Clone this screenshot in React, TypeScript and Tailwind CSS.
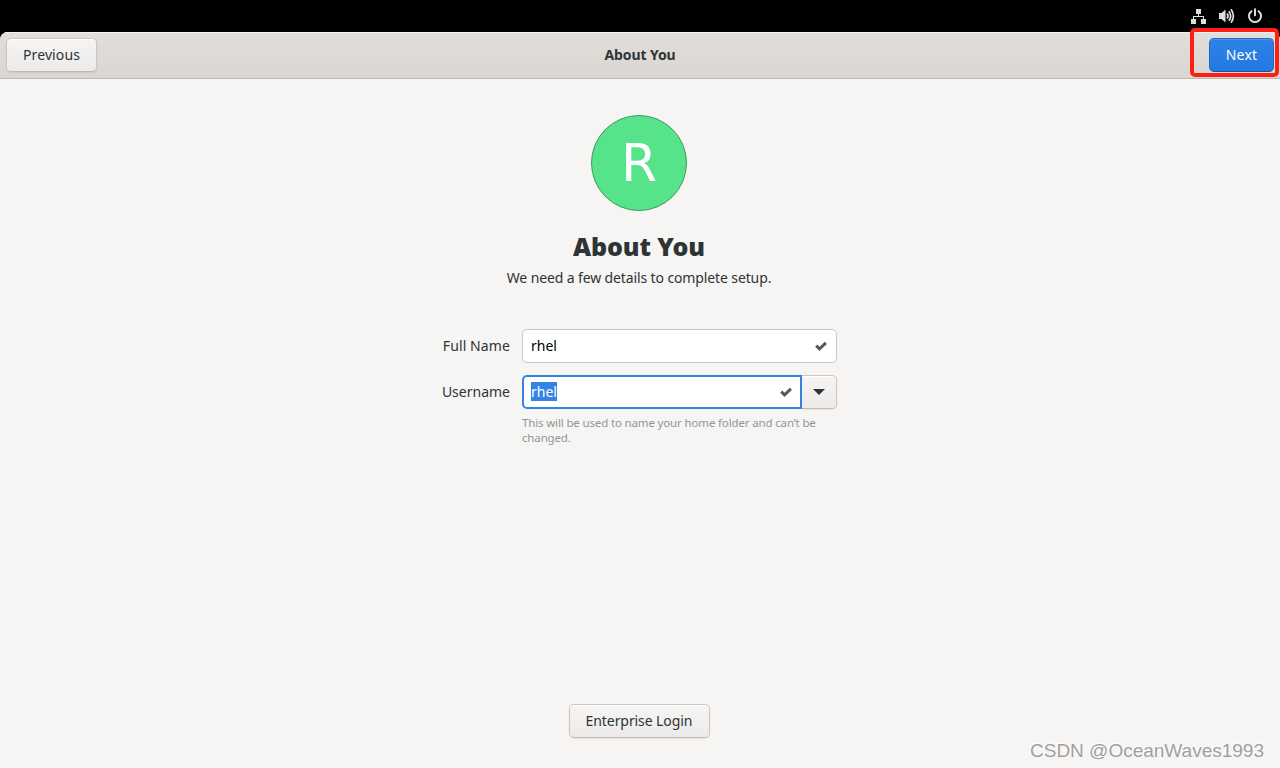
/**
 * Initial setup: "About You" page
 */
import { useState } from 'react'

const button =
  'h-[34px] border border-[#cdc7c2] border-b-[#bfb8b1] rounded-[5px] bg-linear-to-b from-[#f6f5f3] to-[#edebe9] shadow-[inset_0_1px_#fff,0_1px_2px_rgba(0,0,0,0.07)] flex items-center justify-center whitespace-nowrap'

function NetworkIcon() {
  return (
    <svg width="16" height="16" viewBox="0 0 16 16" fill="#dededa">
      <path d="M5 1h5v5H5zM0 11h5v5H0zM10 11h5v5h-5z" />
      <path d="M7 6h1v2h5v3h-1V9H3v2H2V8h5z" />
    </svg>
  )
}

function VolumeIcon() {
  return (
    <svg width="16" height="16" viewBox="0 0 16 16" fill="none" stroke="#dededa">
      <path d="M0 5h2.500L6.500 1.500v13L2.500 11H0z" fill="#dededa" stroke="none" />
      <path d="M8 5.500q2 2.500 0 5" strokeWidth="1.700" />
      <path d="M9.900 3.200q3.600 4.800 0 9.600" strokeWidth="1.800" />
      <path d="M12 1.200q4.800 6.800 0 13.600" strokeWidth="1.700" />
    </svg>
  )
}

function PowerIcon() {
  return (
    <svg width="16" height="16" viewBox="0 0 16 16" fill="none" stroke="#dededa" strokeWidth="2" strokeLinecap="round">
      <path d="M8 1.200v6" />
      <path d="M4.500 3.200a6 6 0 1 0 7 0" />
    </svg>
  )
}

function CheckIcon() {
  return (
    <svg width="12" height="10" viewBox="0 0 12 10" fill="none" stroke="#555b5b" strokeWidth="3">
      <path d="M1.200 4.600 4.500 7.900 10.900 1.800" />
    </svg>
  )
}

export default function App() {
  const [fullName] = useState('rhel')
  const [username] = useState('rhel')

  return (
    <div className="relative w-[1280px] h-[768px] overflow-hidden bg-black font-['Noto_Sans','Noto_Sans_CJK_SC',sans-serif] text-[14px] leading-5 text-[#2e3436] flex flex-col">
      <div className="h-8 shrink-0 flex items-center justify-end gap-3 pr-[17px]">
        <NetworkIcon />
        <VolumeIcon />
        <PowerIcon />
      </div>

      <div className="flex-1 flex flex-col rounded-t-lg overflow-hidden bg-[#f6f5f4]">
        <header className="h-[47px] shrink-0 grid grid-cols-[1fr_auto_1fr] items-center px-[6px] border-b border-[#bfb8b1] bg-linear-to-b from-[#e1dedb] to-[#dad6d2] shadow-[inset_0_1px_#f4f2f1]">
          <button className={`${button} w-[91px]`}>
            <span className="tracking-[0.1px]">Previous</span>
          </button>
          <h1 className="font-bold tracking-[-0.1px]">About You</h1>
          <button className="h-[34px] w-[65px] justify-self-end rounded-[5px] border border-[#1b6acb] border-b-[#15539e] bg-linear-to-b from-[#2f81e4] to-[#2379e2] text-white flex items-center justify-center shadow-[inset_0_1px_rgba(255,255,255,0.15)]">
            <span className="tracking-[0.2px]">Next</span>
          </button>
        </header>

        <main className="flex-1 flex flex-col items-center pt-9 pb-[30px] pr-[2px]">
          <div className="size-24 rounded-full border border-[#3f9a61] bg-[#57e389] text-white font-['DejaVu_Sans',sans-serif] text-[52px] leading-none flex items-center justify-center">
            <span>R</span>
          </div>
          <h2 className="mt-[17px] text-[25px] leading-9 font-black tracking-[-0.1px]">About You</h2>
          <p className="mt-1 tracking-[-0.12px] whitespace-nowrap">We need a few details to complete setup.</p>

          <div className="mt-[41px] w-[396px] grid grid-cols-[69px_315px] gap-x-3 gap-y-3 items-center">
            <label className="text-right whitespace-nowrap tracking-[0.1px]">Full Name</label>
            <div className="h-[34px] pl-2 pr-[9px] rounded-[5px] border border-[#cdc7c2] bg-white text-black flex items-center justify-between">
              <span>{fullName}</span>
              <CheckIcon />
            </div>
            <label className="text-right whitespace-nowrap">Username</label>
            <div className="flex">
              <div className="w-[280px] h-[34px] pl-[7px] pr-2 rounded-l-[5px] border-2 border-[#3584e4] bg-white flex items-center justify-between">
                <span className="bg-[#3584e4] text-white h-[19px] leading-5 -mt-px">{username}</span>
                <CheckIcon />
              </div>
              <button className={`${button} w-[35px] rounded-l-none border-l-0`}>
                <svg width="12" height="6" viewBox="0 0 12 6" fill="#2e3436">
                  <path d="M0 0h12L6 6z" />
                </svg>
              </button>
            </div>
            <p className="col-start-2 -mt-[6px] text-[11.500px] leading-[15px] tracking-[-0.15px] text-[#929595]">
              This will be used to name your home folder and can’t be
              <br />
              changed.
            </p>
          </div>

          <button className={`${button} w-[141px] mt-auto`}>
            <span className="tracking-[-0.08px]">Enterprise Login</span>
          </button>
        </main>
      </div>

      <div className="absolute left-[1190px] top-[28px] w-[89px] h-[49px] rounded-[5px] border-4 border-[#ff2015]" />
      <div className="absolute right-4 bottom-[5px] font-['Liberation_Sans',sans-serif] text-[19px] leading-6 text-[#a0a0a0] [text-shadow:-1px_-1px_#fff] whitespace-nowrap">
        CSDN @OceanWaves1993
      </div>
    </div>
  )
}
